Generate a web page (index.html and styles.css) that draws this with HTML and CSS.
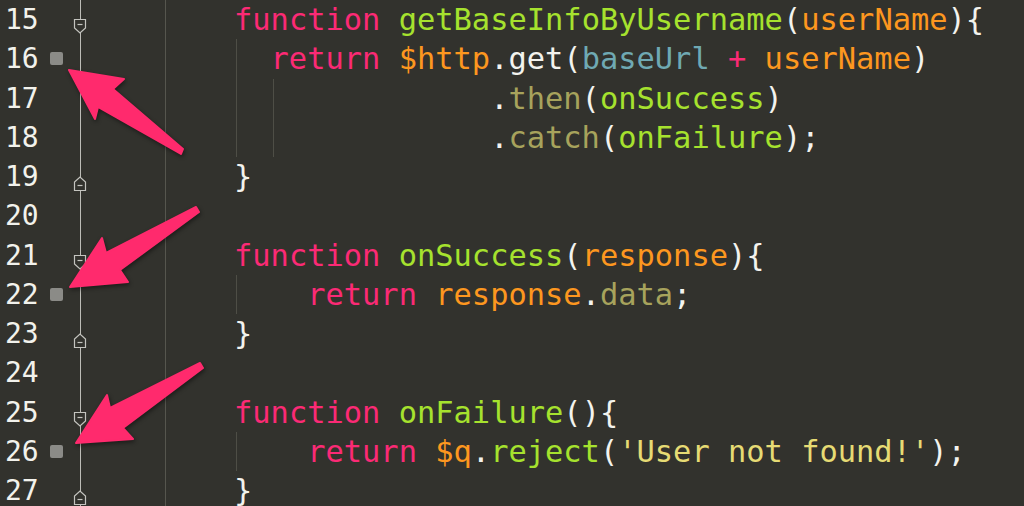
FILE: index.html
```html
<!DOCTYPE html>
<html>
<head>
<meta charset="utf-8">
<link rel="stylesheet" href="styles.css">
</head>
<body>
<div class="editor">
  <div class="row">
    <div class="num">15</div><div class="mark"></div>
    <div class="fold"><svg class="fm" viewBox="0 0 14 15" width="14" height="15"><path d="M1.5 0.5 H12.5 V9 L7 14 L1.5 9 Z"/><line x1="4.5" y1="5.5" x2="9.5" y2="5.5"/></svg></div>
    <div class="pad"></div>
    <div class="code"><span class="t"><span class="k">function</span> <span class="f">getBaseInfoByUsername</span>(<span class="p">userName</span>){</span></div>
  </div>
  <div class="row">
    <div class="num">16</div><div class="mark"><span class="bm"></span></div>
    <div class="fold"></div>
    <div class="pad"></div>
    <div class="code"><span class="ig w2">  </span><span class="t"><span class="k">return</span> <span class="p">$http</span>.get(<span class="v">baseUrl</span> <span class="k">+</span> <span class="p">userName</span>)</span></div>
  </div>
  <div class="row">
    <div class="num">17</div><div class="mark"></div>
    <div class="fold"></div>
    <div class="pad"></div>
    <div class="code"><span class="ig w2">  </span><span class="ig w12">            </span><span class="t">.<span class="m">then</span>(<span class="f">onSuccess</span>)</span></div>
  </div>
  <div class="row">
    <div class="num">18</div><div class="mark"></div>
    <div class="fold"></div>
    <div class="pad"></div>
    <div class="code"><span class="ig w2">  </span><span class="ig w12">            </span><span class="t">.<span class="m">catch</span>(<span class="f">onFailure</span>);</span></div>
  </div>
  <div class="row">
    <div class="num">19</div><div class="mark"></div>
    <div class="fold"><svg class="fm" viewBox="0 0 14 15" width="14" height="15"><path d="M1.5 14.5 H12.5 V6 L7 1 L1.5 6 Z"/><line x1="4.5" y1="9.5" x2="9.5" y2="9.5"/></svg></div>
    <div class="pad"></div>
    <div class="code"><span class="t">}</span></div>
  </div>
  <div class="row">
    <div class="num">20</div><div class="mark"></div>
    <div class="fold"></div>
    <div class="pad"></div>
    <div class="code"></div>
  </div>
  <div class="row">
    <div class="num">21</div><div class="mark"></div>
    <div class="fold"><svg class="fm" viewBox="0 0 14 15" width="14" height="15"><path d="M1.5 0.5 H12.5 V9 L7 14 L1.5 9 Z"/><line x1="4.5" y1="5.5" x2="9.5" y2="5.5"/></svg></div>
    <div class="pad"></div>
    <div class="code"><span class="t"><span class="k">function</span> <span class="f">onSuccess</span>(<span class="p">response</span>){</span></div>
  </div>
  <div class="row">
    <div class="num">22</div><div class="mark"><span class="bm"></span></div>
    <div class="fold"></div>
    <div class="pad"></div>
    <div class="code"><span class="ig w4">    </span><span class="t"><span class="k">return</span> <span class="p">response</span>.<span class="m">data</span>;</span></div>
  </div>
  <div class="row">
    <div class="num">23</div><div class="mark"></div>
    <div class="fold"><svg class="fm" viewBox="0 0 14 15" width="14" height="15"><path d="M1.5 14.5 H12.5 V6 L7 1 L1.5 6 Z"/><line x1="4.5" y1="9.5" x2="9.5" y2="9.5"/></svg></div>
    <div class="pad"></div>
    <div class="code"><span class="t">}</span></div>
  </div>
  <div class="row">
    <div class="num">24</div><div class="mark"></div>
    <div class="fold"></div>
    <div class="pad"></div>
    <div class="code"></div>
  </div>
  <div class="row">
    <div class="num">25</div><div class="mark"></div>
    <div class="fold"><svg class="fm" viewBox="0 0 14 15" width="14" height="15"><path d="M1.5 0.5 H12.5 V9 L7 14 L1.5 9 Z"/><line x1="4.5" y1="5.5" x2="9.5" y2="5.5"/></svg></div>
    <div class="pad"></div>
    <div class="code"><span class="t"><span class="k">function</span> <span class="f">onFailure</span>(){</span></div>
  </div>
  <div class="row">
    <div class="num">26</div><div class="mark"><span class="bm"></span></div>
    <div class="fold"></div>
    <div class="pad"></div>
    <div class="code"><span class="ig w4">    </span><span class="t"><span class="k">return</span> <span class="p">$q</span>.<span class="f">reject</span>(<span class="s">'User not found!'</span>);</span></div>
  </div>
  <div class="row">
    <div class="num">27</div><div class="mark"></div>
    <div class="fold"><svg class="fm" viewBox="0 0 14 15" width="14" height="15"><path d="M1.5 14.5 H12.5 V6 L7 1 L1.5 6 Z"/><line x1="4.5" y1="9.5" x2="9.5" y2="9.5"/></svg></div>
    <div class="pad"></div>
    <div class="code"><span class="t">}</span></div>
  </div>

  <svg class="arrows" width="1024" height="506" viewBox="0 0 1024 506">
    <polygon points="69,70 124,79 113,89 183,149 181,154 98,107 95,119"/>
    <polygon points="70,287 102,238 106,253 196,207 199,212 120,270 128,282"/>
    <polygon points="76,443 107,395 110,408 200,363 203,368 123,428 133,439"/>
  </svg>
</div>
</body>
</html>
```

FILE: styles.css
```css
html, body {
  margin: 0;
  padding: 0;
  background: #32322d;
}

.editor {
  position: relative;
  width: 1024px;
  height: 506px;
  overflow: hidden;
  background: #32322d;
  font-family: "DejaVu Sans Mono", "Liberation Mono", monospace;
  color: #f3f3ee;
}

.row {
  display: flex;
  height: 39.25px;
}

.num {
  width: 48px;
  box-sizing: border-box;
  padding-left: 5px;
  font-size: 28px;
  line-height: 39.25px;
  color: #f2f2ec;
}

.mark {
  width: 20px;
  display: flex;
  align-items: center;
}

.bm {
  display: block;
  width: 13px;
  height: 13px;
  margin-left: 2px;
  border-radius: 2px;
  background: #8b8b87;
}

.fold {
  width: 24px;
  position: relative;
  background: linear-gradient(to right, transparent 11.5px, #bdbdb7 11.5px, #bdbdb7 12.5px, transparent 12.5px);
}

.fm {
  position: absolute;
  left: 5px;
  top: 19px;
  fill: #32322d;
  stroke: #c4c4bf;
  stroke-width: 1.2;
}

.pad {
  width: 73px;
  border-right: 1px solid #56564e;
}

.code {
  display: flex;
  padding-left: 68px;
  font-size: 30.4px;
  line-height: 39.25px;
  white-space: pre;
}

.ig {
  display: block;
  background: linear-gradient(to right, transparent 2px, #4e4e46 2px, #4e4e46 3px, transparent 3px);
}

.w2 { width: 2ch; }
.w4 { width: 4ch; }
.w12 { width: 12ch; }

.t { display: block; }

.k { color: #fb2a75; }
.f { color: #a6e22e; }
.p { color: #fd971f; }
.v { color: #6fa9b3; }
.m { color: #a7a35c; }
.s { color: #e6db74; }

.arrows {
  position: absolute;
  left: 0;
  top: 0;
  fill: #ff2a6d;
  stroke: #ff2a6d;
  stroke-width: 2;
  stroke-linejoin: round;
  filter: drop-shadow(1px 2px 2px rgba(0, 0, 0, 0.45));
}
```
